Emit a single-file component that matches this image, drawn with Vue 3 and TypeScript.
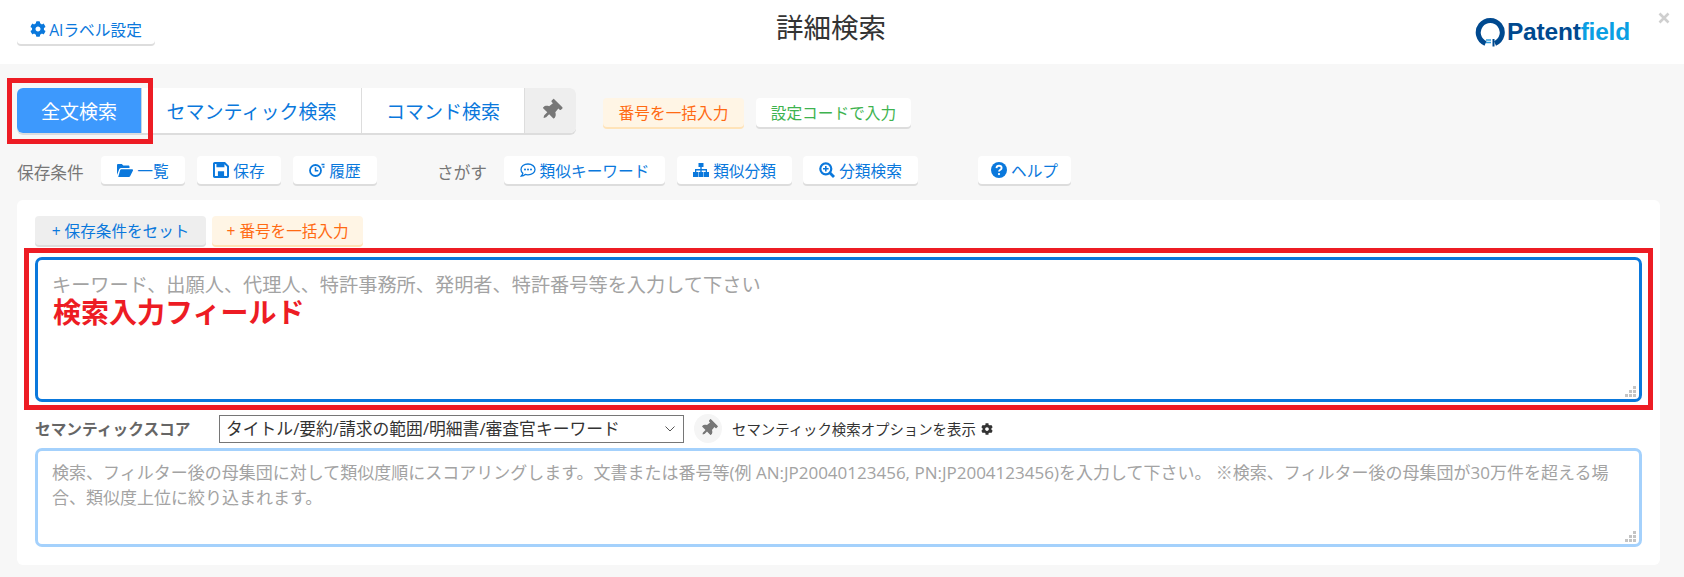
<script setup lang="ts">
const cog = "M487.4 315.7l-42.6-24.6c4.3-23.2 4.3-47 0-70.2l42.6-24.6c4.9-2.8 7.1-8.6 5.5-14-11.1-35.6-30-67.8-54.7-94.6-3.8-4.1-10-5.1-14.8-2.3L380.8 110c-17.9-15.4-38.5-27.3-60.8-35.1V25.8c0-5.6-3.9-10.5-9.4-11.7-36.7-8.2-74.3-7.8-109.2 0-5.5 1.2-9.4 6.1-9.4 11.7V75c-22.2 7.9-42.8 19.8-60.8 35.1L88.7 85.5c-4.9-2.8-11-1.9-14.8 2.3-24.7 26.7-43.6 58.9-54.7 94.6-1.7 5.4.6 11.2 5.5 14L67.3 221c-4.3 23.2-4.3 47 0 70.2l-42.6 24.6c-4.9 2.8-7.1 8.6-5.5 14 11.1 35.6 30 67.8 54.7 94.6 3.8 4.1 10 5.1 14.8 2.3l42.6-24.6c17.9 15.4 38.5 27.3 60.8 35.1v49.2c0 5.6 3.9 10.5 9.4 11.7 36.7 8.2 74.3 7.8 109.2 0 5.5-1.2 9.4-6.1 9.4-11.7v-49.2c22.2-7.9 42.8-19.8 60.8-35.1l42.6 24.6c4.9 2.8 11 1.9 14.8-2.3 24.7-26.7 43.6-58.9 54.7-94.6 1.5-5.5-.7-11.3-5.6-14.1zM256 336c-44.1 0-80-35.9-80-80s35.9-80 80-80 80 35.9 80 80-35.9 80-80 80z";
const pin = "M298.028 214.267L285.793 96H328c13.255 0 24-10.745 24-24V24c0-13.255-10.745-24-24-24H56C42.745 0 32 10.745 32 24v48c0 13.255 10.745 24 24 24h42.207L85.972 214.267C37.465 236.82 0 277.261 0 328c0 13.255 10.745 24 24 24h136v104.007c0 1.242.289 2.467.845 3.578l24 48c2.941 5.882 11.364 5.893 14.311 0l24-48a8.008 8.008 0 0 0 .845-3.578V352h136c13.255 0 24-10.745 24-24-.001-51.183-37.983-91.42-85.973-113.733z";
const mainHint = "キーワード、出願人、代理人、特許事務所、発明者、特許番号等を入力して下さい";
const scoreHint = "検索、フィルター後の母集団に対して類似度順にスコアリングします。文書または番号等(例 AN:JP20040123456, PN:JP2004123456)を入力して下さい。 ※検索、フィルター後の母集団が30万件を超える場合、類似度上位に絞り込まれます。";
</script>

<template>
  <div class="page">
    <header class="head">
      <button class="btn ai">
        <svg class="ic" viewBox="0 0 512 512"><path :d="cog" /></svg>AIラベル設定
      </button>
      <h1 class="title">詳細検索</h1>
      <div class="logo">
        <svg class="bulb" viewBox="0 0 30 30">
          <path d="M10.5 26.5A12 12 0 1 1 20 26.5" fill="none" stroke="#00498f" stroke-width="5" />
          <path d="M11 23h5M11 25.500h5" stroke="#2f9fe0" stroke-width="1.300" />
          <path d="M18.500 22v7.500" stroke="#00498f" stroke-width="2" />
        </svg>
        <span class="logo-text">Patent<span class="logo-field">field</span></span>
      </div>
      <svg class="close" viewBox="0 0 12 12"><path d="M1.500 1.500l9 9M10.500 1.500l-9 9" stroke="#cfcfcf" stroke-width="2.600" /></svg>
    </header>

    <main class="main">
      <div class="row-tabs">
        <div class="tabs">
          <button class="tab active">全文検索</button>
          <button class="tab wide">セマンティック検索</button>
          <button class="tab cmd">コマンド検索</button>
          <button class="tab pin-tab">
            <svg class="pin" viewBox="0 0 384 512"><path :d="pin" /></svg>
          </button>
        </div>
        <button class="btn tool orange">番号を一括入力</button>
        <button class="btn tool green">設定コードで入力</button>
      </div>

      <div class="row-actions">
        <span class="lbl">保存条件</span>
        <button class="btn act">
          <svg class="ic" viewBox="0 0 16 14"><path d="M0 12V2.200C0 1.500.5 1 1.200 1h3.600l1.500 1.500h5c.7 0 1.200.5 1.200 1.200V5H4.200c-.8 0-1.500.4-1.900 1.100L0 12zm1.200 2h10.700c.5 0 .9-.3 1.200-.7L16 7.500c.3-.6-.1-1.300-.8-1.300H4.400c-.5 0-.9.300-1.200.7L1.200 14z" /></svg>一覧
        </button>
        <button class="btn act">
          <svg class="ic" viewBox="0 0 14 14"><path fill-rule="evenodd" d="M1.500 0h9L14 3.500v9c0 .8-.7 1.500-1.500 1.500h-11C.7 14 0 13.300 0 12.500v-11C0 .7.700 0 1.500 0zm.2 1.700v10.600h10.600V4.200L10 1.900v2.600H3V1.700H1.700zM4.300 8h5.400v4.300H4.300V8z" /></svg>保存
        </button>
        <button class="btn act">
          <svg class="ic" viewBox="0 0 16 14">
            <circle cx="6.500" cy="7.500" r="5.500" fill="none" stroke="currentColor" stroke-width="1.800" />
            <path d="M6.500 4.200v3.600h2.800" fill="none" stroke="currentColor" stroke-width="1.500" />
            <path d="M12.500 1.500h3M13.500 4h2" stroke="currentColor" stroke-width="1.500" />
          </svg>履歴
        </button>
        <span class="lbl find">さがす</span>
        <button class="btn act kw">
          <svg class="ic" viewBox="0 0 16 16">
            <path d="M8 2C4 2 1 4.300 1 7.500c0 1.500.7 2.800 1.800 3.800-.2 1-.8 2-1.500 2.700 1.600-.1 3-.8 3.900-1.600.9.300 1.800.4 2.800.4 4 0 7-2.300 7-5.300S12 2 8 2z" fill="none" stroke="currentColor" stroke-width="1.300" />
            <circle cx="5" cy="7.600" r="1" /><circle cx="8" cy="7.600" r="1" /><circle cx="11" cy="7.600" r="1" />
          </svg>類似キーワード
        </button>
        <button class="btn act cls">
          <svg class="ic" viewBox="0 0 16 14"><path d="M5.500 0h5v4H8.700v2H14v3h2v5h-5V9h1.700V7.500H8.700V9h1.800v5h-5V9h1.800V7.500H3.300V9H5v5H0V9h2V6h5.300V4H5.500z" /></svg>類似分類
        </button>
        <button class="btn act cls last">
          <svg class="ic" viewBox="0 0 16 16">
            <circle cx="6.800" cy="6.800" r="5.500" fill="none" stroke="currentColor" stroke-width="2.200" />
            <path d="M10.800 10.800L15 15" stroke="currentColor" stroke-width="2.800" />
            <path d="M6.800 4v5.600M4 6.800h5.600" stroke="currentColor" stroke-width="1.600" />
          </svg>分類検索
        </button>
        <button class="btn act help">
          <svg class="ic" viewBox="0 0 14 14">
            <circle cx="7" cy="7" r="7" />
            <path d="M4.800 5.300C4.900 4 5.900 3.300 7 3.300c1.300 0 2.300.8 2.300 1.900 0 1.700-2.300 1.500-2.300 3.200" fill="none" stroke="#fff" stroke-width="1.600" />
            <circle cx="7" cy="10.600" r="1" fill="#fff" />
          </svg>ヘルプ
        </button>
      </div>

      <section class="panel">
        <div class="chips">
          <button class="chip gray">+ 保存条件をセット</button>
          <button class="chip peach">+ 番号を一括入力</button>
        </div>

        <div class="editor">
          <textarea class="area strong" :placeholder="mainHint"></textarea>
          <svg class="grip" viewBox="0 0 11 11"><path d="M8 0h3v3H8zM4 4h3v3H4zM8 4h3v3H8zM0 8h3v3H0zM4 8h3v3H4zM8 8h3v3H8z" /></svg>
          <span class="note">検索入力フィールド</span>
        </div>

        <div class="score-row">
          <label class="score-lbl">セマンティックスコア</label>
          <div class="sel-wrap">
            <select class="sel">
              <option>タイトル/要約/請求の範囲/明細書/審査官キーワード</option>
            </select>
            <svg class="chev" viewBox="0 0 10 6"><path d="M.5.500L5 5 9.500.500" fill="none" stroke="#555" stroke-width="1" /></svg>
          </div>
          <span class="round-pin">
            <svg class="pin small" viewBox="0 0 384 512"><path :d="pin" /></svg>
          </span>
          <span class="opt">セマンティック検索オプションを表示</span>
          <svg class="opt-cog" viewBox="0 0 512 512"><path :d="cog" /></svg>
        </div>

        <div class="score-box">
          <textarea class="area light" :placeholder="scoreHint"></textarea>
          <svg class="grip" viewBox="0 0 11 11"><path d="M8 0h3v3H8zM4 4h3v3H4zM8 4h3v3H8zM0 8h3v3H0zM4 8h3v3H4zM8 8h3v3H8z" /></svg>
        </div>
      </section>
    </main>
  </div>
</template>

<style>
html, body { margin: 0; background: #f7f7f7; }
</style>

<style scoped>
.page {
  width: 1684px;
  height: 577px;
  overflow: hidden;
  background: #f7f7f7;
  font-family: "Open Sans", "Noto Sans CJK JP", sans-serif;
}
button { font-family: inherit; cursor: pointer; }

.head {
  position: relative;
  height: 64px;
  box-sizing: border-box;
  background: #fff;
  display: grid;
  grid-template-columns: 1fr auto 1fr;
  align-items: center;
  padding: 0 39px 0 17px;
}
.title {
  margin: 0 0 8px;
  font-size: 27.500px;
  font-weight: 400;
  line-height: 40px;
  color: #333;
}
.logo {
  justify-self: end;
  margin-right: 15px;
  display: flex;
  align-items: center;
  gap: 2px;
}
.bulb { width: 30px; height: 30px; }
.logo-text {
  font-family: "Liberation Sans", sans-serif;
  font-size: 24.500px;
  font-weight: 700;
  letter-spacing: -0.2px;
  color: #00498f;
}
.logo-field { color: #0a9fe3; }
.close {
  position: absolute;
  right: 14px;
  top: 12px;
  width: 12px;
  height: 12px;
}

.btn {
  display: inline-flex;
  align-items: center;
  justify-content: center;
  gap: 3px;
  border: 0;
  border-radius: 4px;
  background: #fff;
  color: #0a78dc;
  box-shadow: 0 2px 0 #ddd;
  white-space: nowrap;
  padding: 0;
  font-size: 15.700px;
}
.ai {
  justify-self: start;
  width: 138px;
  height: 29px;
  margin-top: -6px;
}
.ic { width: 16px; height: 16px; fill: currentColor; flex: none; }

.main { padding: 24px 15px 0 17px; }

.row-tabs { display: flex; align-items: flex-start; }
.tabs {
  display: flex;
  width: 559px;
  height: 45px;
  border-radius: 6px;
  box-shadow: 0 2px 0 #ddd;
  background: #fff;
  margin-right: 27px;
}
.tab {
  height: 45px;
  border: 0;
  padding: 0;
  background: #fff;
  color: #0a78dc;
  font-size: 19px;
  border-right: 1px solid #ddd;
}
.tab.active {
  position: relative;
  width: 125px;
  background: #3d99fd;
  color: #fff;
  border-radius: 6px 0 0 6px;
  border-right: 1px solid #c9d6e2;
}
.tab.active::after {
  content: "";
  position: absolute;
  left: -10px;
  top: -10px;
  width: 146px;
  height: 66px;
  box-sizing: border-box;
  border: 5px solid #ed1c24;
  pointer-events: none;
}
.tab.wide { width: 220px; }
.tab.cmd { width: 163px; }
.tab.pin-tab {
  width: 51px;
  background: #eee;
  border-right: 0;
  border-radius: 0 6px 6px 0;
  display: flex;
  align-items: center;
  justify-content: center;
}
.pin { width: 16px; height: 21px; fill: #777; transform: rotate(45deg); }
.pin.small { width: 13px; height: 17px; }

.tool { height: 29px; margin-top: 10px; }
.orange { width: 141px; background: #fff5e5; color: #ff6a13; box-shadow: 0 2px 0 #ffe3b8; margin-right: 12px; }
.green { width: 155px; color: #3eb34f; }

.row-actions {
  display: flex;
  align-items: center;
  margin-top: 23px;
  height: 31px;
}
.lbl { font-size: 16.700px; color: #777; width: 84px; white-space: nowrap; }
.find { width: 67px; margin-left: 48px; }
.act {
  width: 84px;
  height: 28px;
  margin-right: 12px;
  align-self: flex-start;
  gap: 4px;
}
.kw { width: 161px; }
.cls { width: 115px; margin-right: 11px; }
.cls.last { margin-right: 60px; }
.act.help { width: 93px; margin-right: 0; }

.panel {
  box-sizing: border-box;
  width: 1643px;
  height: 365px;
  margin-top: 13px;
  padding: 16px 18px 18px;
  background: #fff;
  border-radius: 6px;
}
.chips { display: flex; gap: 6px; }
.chip {
  height: 29px;
  border: 0;
  border-radius: 4px;
  padding: 0;
  font-size: 15.600px;
}
.gray { width: 171px; background: #eee; color: #0a78dc; box-shadow: 0 2px 0 #ddd; }
.peach { width: 151px; background: #fff5e5; color: #ff6a13; box-shadow: 0 2px 0 #ffe3b8; }

.editor { position: relative; margin-top: 12px; height: 145px; }
.editor::after {
  content: "";
  position: absolute;
  left: -11px;
  right: -11px;
  top: -9px;
  bottom: -8px;
  border: 5px solid #ed1c24;
  pointer-events: none;
}
.area {
  display: block;
  width: 100%;
  height: 100%;
  box-sizing: border-box;
  resize: none;
  outline: 0;
  background: #fff;
  border-radius: 7px;
  font-family: inherit;
  color: #333;
  margin: 0;
}
.area::placeholder { color: #a3a3a3; opacity: 1; }
.strong {
  border: 3px solid #0a78dc;
  padding: 11px 14px;
  font-size: 19.200px;
  line-height: 27px;
}
.light {
  border: 3px solid #a4d1fc;
  padding: 9px 14px;
  font-size: 17px;
  line-height: 25px;
}
.note {
  position: absolute;
  left: 18px;
  top: 33px;
  font-size: 28px;
  line-height: 44px;
  font-weight: 700;
  color: #ed1c24;
  white-space: nowrap;
  pointer-events: none;
}
.grip {
  position: absolute;
  right: 6px;
  bottom: 5px;
  width: 11px;
  height: 11px;
  fill: #c4c4c4;
}

.score-row {
  display: flex;
  align-items: center;
  height: 29px;
  margin-top: 12px;
}
.score-lbl { width: 184px; font-size: 15.700px; font-weight: 700; color: #666; white-space: nowrap; }
.sel-wrap { position: relative; width: 465px; height: 28px; }
.sel {
  appearance: none;
  display: block;
  width: 100%;
  height: 100%;
  box-sizing: border-box;
  font-family: inherit;
  font-size: 16.800px;
  color: #333;
  background: #fff;
  border: 1px solid #767676;
  border-radius: 0;
  padding: 0 0 0 6px;
  outline: 0;
}
.chev {
  position: absolute;
  right: 9px;
  top: 11px;
  width: 10px;
  height: 6px;
  pointer-events: none;
}
.round-pin {
  width: 28px;
  height: 29px;
  margin: 0 10px;
  border-radius: 50%;
  background: #f5f5f5;
  display: flex;
  align-items: center;
  justify-content: center;
}
.opt { font-size: 14.400px; color: #333; white-space: nowrap; }
.opt-cog { width: 12px; height: 12px; margin-left: 5px; fill: #333; }
.score-box { position: relative; margin-top: 5px; height: 99px; }
</style>
